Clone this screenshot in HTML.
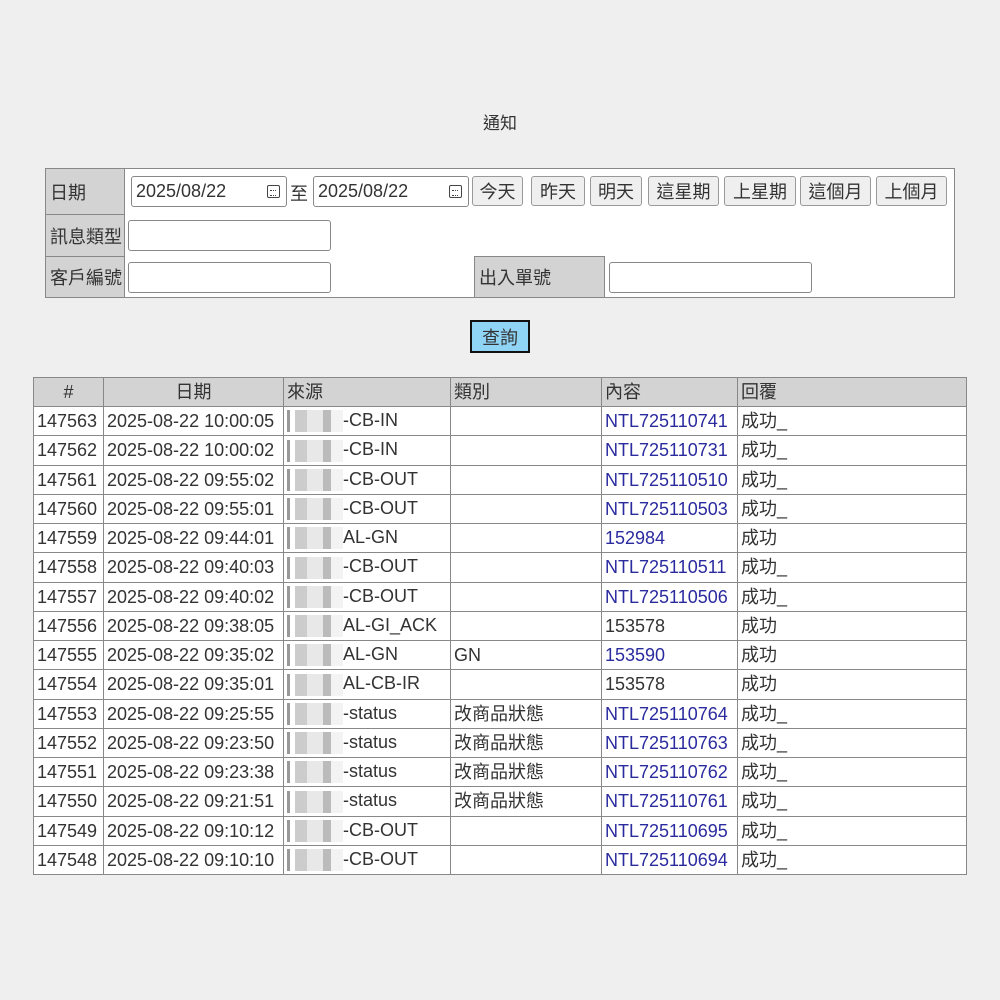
<!DOCTYPE html>
<html><head><meta charset="utf-8"><style>
body{margin:0;background:#efefef;font-family:"Liberation Sans","Noto Sans CJK TC",sans-serif;font-size:18px;color:#333;width:1000px;height:1000px;position:relative;overflow:hidden}
.a{position:absolute}
.title{left:0;width:1000px;top:109px;text-align:center;font-size:17px}
.ft{left:45px;top:168px;width:910px;height:130px;background:#fff;border:1px solid #888;box-sizing:border-box}
.lab{background:#d3d3d3;border:1px solid #888;box-sizing:border-box;padding-left:4px;font-size:18px;display:flex;align-items:center}
.inp{background:#fff;border:1px solid #888;border-radius:3px;box-sizing:border-box;height:31px;padding-left:4px;display:flex;align-items:center}
.btn{background:#efefef;border:1px solid #999;border-radius:3px;box-sizing:border-box;height:30px;top:176px;display:flex;align-items:center;justify-content:center}
.cal{position:absolute;right:6px;top:8px;width:13px;height:13px;border:1.5px solid #444;border-radius:2px;box-sizing:border-box}
.cal:after{content:"";position:absolute;left:2px;top:4px;width:6px;height:4px;border-top:1.5px dotted #444;border-bottom:1.5px dotted #444}
table{position:absolute;left:33px;top:377px;width:934px;border-collapse:collapse;table-layout:fixed;background:#fff}
td,th{border:1px solid #888;height:28.25px;padding:0 3px;white-space:nowrap;overflow:hidden;font-weight:normal;font-size:18px;line-height:20px;vertical-align:middle}
th{background:#d3d3d3;height:28px}
.b{color:#2b2ba0}
.bl{display:inline-block;width:56px;height:22px;vertical-align:middle;background:linear-gradient(90deg,#999 0 3px,#fff 3px 8px,#ccc 8px 20px,#e8e8e8 20px 36px,#bbb 36px 44px,#f3f3f3 44px)}
</style></head><body>
<div class="a title">通知</div>
<div class="a ft"></div>
<div class="a lab" style="left:45px;top:168px;width:80px;height:47px">日期</div>
<div class="a lab" style="left:45px;top:214px;width:80px;height:43px">訊息類型</div>
<div class="a lab" style="left:45px;top:256px;width:80px;height:42px">客戶編號</div>
<div class="a lab" style="left:474px;top:256px;width:131px;height:42px">出入單號</div>
<div class="a inp" style="left:131px;top:176px;width:156px">2025/08/22<span class="cal"></span></div>
<div class="a" style="left:290px;top:180px">至</div>
<div class="a inp" style="left:313px;top:176px;width:156px">2025/08/22<span class="cal"></span></div>
<div class="a btn" style="left:472px;width:51px">今天</div>
<div class="a btn" style="left:531px;width:54px">昨天</div>
<div class="a btn" style="left:590px;width:52px">明天</div>
<div class="a btn" style="left:648px;width:71px">這星期</div>
<div class="a btn" style="left:724px;width:72px">上星期</div>
<div class="a btn" style="left:800px;width:71px">這個月</div>
<div class="a btn" style="left:876px;width:71px">上個月</div>
<div class="a inp" style="left:128px;top:220px;width:203px"></div>
<div class="a inp" style="left:128px;top:262px;width:203px"></div>
<div class="a inp" style="left:609px;top:262px;width:203px"></div>
<div class="a" style="left:470px;top:320px;width:60px;height:33px;background:#8fd3f5;border:2px solid #111;box-sizing:border-box;display:flex;align-items:center;justify-content:center">查詢</div>
<table>
<colgroup><col style="width:70px"><col style="width:180px"><col style="width:167px"><col style="width:151px"><col style="width:136px"><col></colgroup>
<tr><th style="text-align:center">#</th><th style="text-align:center">日期</th><th style="text-align:left">來源</th><th style="text-align:left">類別</th><th style="text-align:left">內容</th><th style="text-align:left">回覆</th></tr>
<tr><td>147563</td><td>2025-08-22 10:00:05</td><td><span class="bl"></span>-CB-IN</td><td></td><td class="b">NTL725110741</td><td>成功_</td></tr>
<tr><td>147562</td><td>2025-08-22 10:00:02</td><td><span class="bl"></span>-CB-IN</td><td></td><td class="b">NTL725110731</td><td>成功_</td></tr>
<tr><td>147561</td><td>2025-08-22 09:55:02</td><td><span class="bl"></span>-CB-OUT</td><td></td><td class="b">NTL725110510</td><td>成功_</td></tr>
<tr><td>147560</td><td>2025-08-22 09:55:01</td><td><span class="bl"></span>-CB-OUT</td><td></td><td class="b">NTL725110503</td><td>成功_</td></tr>
<tr><td>147559</td><td>2025-08-22 09:44:01</td><td><span class="bl"></span>AL-GN</td><td></td><td class="b">152984</td><td>成功</td></tr>
<tr><td>147558</td><td>2025-08-22 09:40:03</td><td><span class="bl"></span>-CB-OUT</td><td></td><td class="b">NTL725110511</td><td>成功_</td></tr>
<tr><td>147557</td><td>2025-08-22 09:40:02</td><td><span class="bl"></span>-CB-OUT</td><td></td><td class="b">NTL725110506</td><td>成功_</td></tr>
<tr><td>147556</td><td>2025-08-22 09:38:05</td><td><span class="bl"></span>AL-GI_ACK</td><td></td><td>153578</td><td>成功</td></tr>
<tr><td>147555</td><td>2025-08-22 09:35:02</td><td><span class="bl"></span>AL-GN</td><td>GN</td><td class="b">153590</td><td>成功</td></tr>
<tr><td>147554</td><td>2025-08-22 09:35:01</td><td><span class="bl"></span>AL-CB-IR</td><td></td><td>153578</td><td>成功</td></tr>
<tr><td>147553</td><td>2025-08-22 09:25:55</td><td><span class="bl"></span>-status</td><td>改商品狀態</td><td class="b">NTL725110764</td><td>成功_</td></tr>
<tr><td>147552</td><td>2025-08-22 09:23:50</td><td><span class="bl"></span>-status</td><td>改商品狀態</td><td class="b">NTL725110763</td><td>成功_</td></tr>
<tr><td>147551</td><td>2025-08-22 09:23:38</td><td><span class="bl"></span>-status</td><td>改商品狀態</td><td class="b">NTL725110762</td><td>成功_</td></tr>
<tr><td>147550</td><td>2025-08-22 09:21:51</td><td><span class="bl"></span>-status</td><td>改商品狀態</td><td class="b">NTL725110761</td><td>成功_</td></tr>
<tr><td>147549</td><td>2025-08-22 09:10:12</td><td><span class="bl"></span>-CB-OUT</td><td></td><td class="b">NTL725110695</td><td>成功_</td></tr>
<tr><td>147548</td><td>2025-08-22 09:10:10</td><td><span class="bl"></span>-CB-OUT</td><td></td><td class="b">NTL725110694</td><td>成功_</td></tr>
</table>
</body></html>
